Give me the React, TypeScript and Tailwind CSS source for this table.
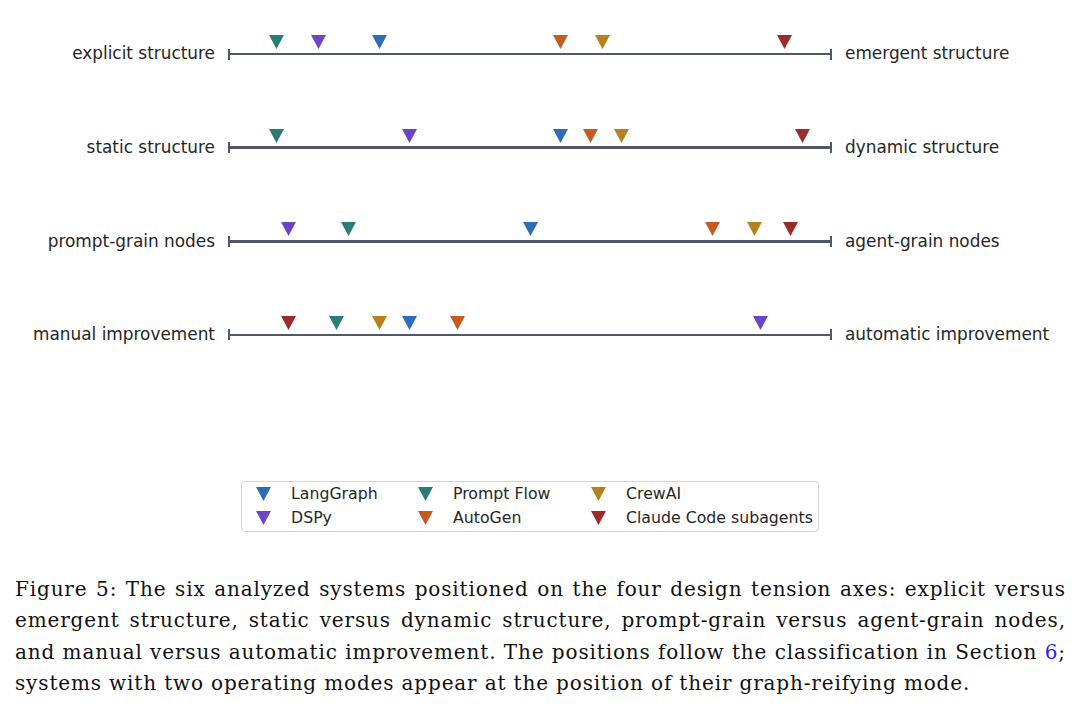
import type { CSSProperties } from 'react'

type System = 'langgraph' | 'dspy' | 'promptflow' | 'autogen' | 'crewai' | 'claude'

const COLORS: Record<System, string> = {
  langgraph: '#2c6db5',
  dspy: '#6c45c4',
  promptflow: '#2a7d75',
  autogen: '#c65a22',
  crewai: '#b8811f',
  claude: '#9c2b2b',
}

// x is the pixel centre of the marker on the page
const AXES: { left: string; right: string; marks: { s: System; x: number }[] }[] = [
  {
    left: 'explicit structure',
    right: 'emergent structure',
    marks: [
      { s: 'promptflow', x: 276 },
      { s: 'dspy', x: 318 },
      { s: 'langgraph', x: 379 },
      { s: 'autogen', x: 560 },
      { s: 'crewai', x: 602 },
      { s: 'claude', x: 784 },
    ],
  },
  {
    left: 'static structure',
    right: 'dynamic structure',
    marks: [
      { s: 'promptflow', x: 276 },
      { s: 'dspy', x: 409 },
      { s: 'langgraph', x: 560 },
      { s: 'autogen', x: 590 },
      { s: 'crewai', x: 621 },
      { s: 'claude', x: 802 },
    ],
  },
  {
    left: 'prompt-grain nodes',
    right: 'agent-grain nodes',
    marks: [
      { s: 'dspy', x: 288 },
      { s: 'promptflow', x: 348 },
      { s: 'langgraph', x: 530 },
      { s: 'autogen', x: 712 },
      { s: 'crewai', x: 754 },
      { s: 'claude', x: 790 },
    ],
  },
  {
    left: 'manual improvement',
    right: 'automatic improvement',
    marks: [
      { s: 'claude', x: 288 },
      { s: 'promptflow', x: 336 },
      { s: 'crewai', x: 379 },
      { s: 'langgraph', x: 409 },
      { s: 'autogen', x: 457 },
      { s: 'dspy', x: 760 },
    ],
  },
]

const LEGEND: { s: System; label: string }[][] = [
  [
    { s: 'langgraph', label: 'LangGraph' },
    { s: 'dspy', label: 'DSPy' },
  ],
  [
    { s: 'promptflow', label: 'Prompt Flow' },
    { s: 'autogen', label: 'AutoGen' },
  ],
  [
    { s: 'crewai', label: 'CrewAI' },
    { s: 'claude', label: 'Claude Code subagents' },
  ],
]

const AXIS_START = 228

function Marker({ color, className, style }: { color: string; className?: string; style?: CSSProperties }) {
  return (
    <svg width="15" height="14" viewBox="0 0 15 14" className={className} style={style} aria-hidden="true">
      <polygon points="0,0 15,0 7.5,14" fill={color} />
    </svg>
  )
}

function AxisRow({ left, right, marks }: (typeof AXES)[number]) {
  return (
    <div className="flex h-[20px] items-center">
      <div className="w-[216px] pr-[1px] text-right">{left}</div>
      <div className="relative ml-[12px] flex h-[20px] w-[604px] items-center">
        <div className="h-[11px] w-[2px] bg-[#4f586b]" />
        <div className="h-[2.5px] flex-1 bg-[#4f586b]" />
        <div className="h-[11px] w-[2px] bg-[#4f586b]" />
        {marks.map((m) => (
          <Marker
            key={m.s}
            color={COLORS[m.s]}
            className="absolute top-[-9px]"
            style={{ left: m.x - AXIS_START - 7.5 }}
          />
        ))}
      </div>
      <div className="ml-[13px]">{right}</div>
    </div>
  )
}

const CAPTION = [
  'Figure 5: The six analyzed systems positioned on the four design tension axes: explicit versus',
  'emergent structure, static versus dynamic structure, prompt-grain versus agent-grain nodes,',
  'and manual versus automatic improvement. The positions follow the classification in Section',
]

export default function App() {
  return (
    <div className="h-[707px] w-[1080px] overflow-hidden bg-white">
      <div
        className="flex flex-col gap-[73.67px] pt-[44px] text-[16.9px] text-[#262626]"
        style={{ fontFamily: '"DejaVu Sans", Verdana, sans-serif' }}
      >
        {AXES.map((a) => (
          <AxisRow key={a.left} {...a} />
        ))}
      </div>

      <div
        className="ml-[241px] mt-[136px] h-[51px] w-[578px] rounded-[4px] border border-[#d4d4d4] pl-[14px] pt-[0.5px] text-[15.75px] text-[#262626]"
        style={{ fontFamily: '"DejaVu Sans", Verdana, sans-serif' }}
      >
        <div className="grid grid-cols-[162px_173px_1fr]">
          {LEGEND.map((col, i) => (
            <div key={i} className="flex flex-col">
              {col.map((item) => (
                <div key={item.s} className="flex h-[23.5px] items-center">
                  <Marker color={COLORS[item.s]} className="shrink-0" />
                  <span className="ml-[20px] leading-none">{item.label}</span>
                </div>
              ))}
            </div>
          ))}
        </div>
      </div>

      <div
        className="mt-[42px] px-[15px] text-[20px] leading-[31.5px] tracking-[0.85px] text-[#111]"
        style={{ fontFamily: '"DejaVu Serif", "Liberation Serif", serif' }}
      >
        {CAPTION.slice(0, 2).map((line) => (
          <div key={line} className="-mr-[0.85px] whitespace-nowrap text-justify [text-align-last:justify]">
            {line}
          </div>
        ))}
        <div className="-mr-[0.85px] whitespace-nowrap text-justify [text-align-last:justify]">
          {CAPTION[2]} <span className="text-[#1f1fff]">6</span>;
        </div>
        <div className="whitespace-nowrap">
          systems with two operating modes appear at the position of their graph-reifying mode.
        </div>
      </div>
    </div>
  )
}
